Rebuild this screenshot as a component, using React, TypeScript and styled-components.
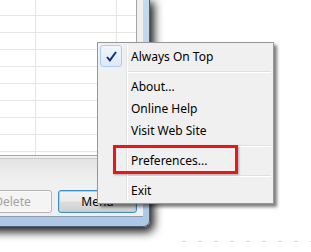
import React from "react";
import styled, {createGlobalStyle} from "styled-components";

const GlobalStyle = createGlobalStyle`
  html, body {
    margin: 0;
    padding: 0;
    background: #fff;
  }
  body {
    width: 311px;
    height: 252px;
    overflow: hidden;
    font-family: "Noto Sans", "Liberation Sans", sans-serif;
  }
`

const Stage = styled.div`
  position: relative;
  width: 311px;
  height: 252px;
  overflow: hidden;
  background: #fff;
`

const Window = styled.div`
  width: 190px;
  box-sizing: border-box;
  margin: -1px 0 0 -40px;
  padding: 0 6px 9px 6px;
  background: linear-gradient(#c4daf0, #adc8e6);
  border: 1px solid #4f6075;
  border-top: none;
  border-radius: 0 0 6px 6px;
  box-shadow: 3px 4px 10px 1px rgba(0, 0, 0, 0.9);
`

const Client = styled.div`
  background: #f0f0f0;
  padding-right: 6px;
  border-bottom: 1px solid #8e9cad;
`

const List = styled.div`
  height: 157px;
  box-sizing: border-box;
  background: #fff;
  border-right: 1px solid #a5a5a5;
  border-bottom: 1px solid #a5a5a5;
  overflow: hidden;
`

const Row = styled.div`
  display: grid;
  grid-template-columns: 69px 81px 1fr;
  height: 17px;
  box-sizing: border-box;
  border-bottom: 1px solid #e6e6e6;
`

const Cell = styled.div<{ $last?: boolean }>`
  border-right: ${p => p.$last ? "none" : "1px solid #e6e6e6"};
`

const Strip = styled.div`
  margin-top: 2px;
  height: 22px;
  border-top: 1px solid #c9c9c9;
  background: linear-gradient(#e4e4e4, #f0f0f0);
`

const ButtonRow = styled.div`
  display: flex;
  justify-content: flex-end;
  gap: 6px;
  padding: 9px 0 3px 0;
`

const Button = styled.div<{ $focused?: boolean; $disabled?: boolean }>`
  width: 79px;
  height: 23px;
  box-sizing: border-box;
  display: flex;
  align-items: center;
  justify-content: center;
  border-radius: 3px;
  font-size: 12px;
  color: ${p => p.$disabled ? "#a3a3a3" : "#000"};
  border: 1px solid ${p => p.$focused ? "#3c8fc9" : "#b4b4b4"};
  background: ${p => p.$disabled
    ? "#f4f4f4"
    : "linear-gradient(#f2f2f2 0%, #ebebeb 48%, #dddddd 52%, #cfcfcf 100%)"};
  box-shadow: ${p => p.$focused ? "inset 0 0 0 1px #8fdcf8" : "inset 0 0 0 1px #fbfbfb"};
`

const GreenRule = styled.div`
  margin: 14px 0 0 182px;
  height: 1px;
  background: repeating-linear-gradient(90deg, #c4f0bd 0 4px, transparent 4px 16px);
`

const Menu = styled.div`
  position: absolute;
  left: 97px;
  top: 42px;
  width: 177px;
  box-sizing: border-box;
  padding: 2px;
  background: #f0f0f0;
  border: 1px solid #979797;
  box-shadow: 3px 3px 3px rgba(0, 0, 0, 0.5);
  font-size: 12px;
  color: #000;

  &::before {
    content: "";
    position: absolute;
    left: 28px;
    top: 2px;
    bottom: 2px;
    width: 1px;
    background: #e2e3e3;
    border-right: 1px solid #fff;
  }
`

const Item = styled.div`
  display: flex;
  align-items: center;
  height: 22px;
`

const Gutter = styled.div<{ $checked?: boolean }>`
  width: 22px;
  height: 22px;
  box-sizing: border-box;
  display: flex;
  align-items: center;
  justify-content: center;
  border-radius: 3px;
  border: 1px solid ${p => p.$checked ? "#aaccf0" : "transparent"};
  background: ${p => p.$checked ? "linear-gradient(#f1f6fd, #dde9f8)" : "transparent"};
`

const Label = styled.span`
  margin-left: 9px;
  white-space: nowrap;
`

const Separator = styled.div`
  height: 8px;
  padding: 4px 0 0 27px;
  box-sizing: border-box;

  &::after {
    content: "";
    display: block;
    height: 1px;
    background: #e0e0e0;
    border-bottom: 1px solid #fff;
  }
`

const Highlight = styled.div`
  position: absolute;
  left: 113px;
  top: 145px;
  width: 125px;
  height: 29px;
  box-sizing: border-box;
  border: 3px solid #e81818;
  box-shadow: 1px 1px 2px rgba(0, 0, 0, 0.3);
`

const CheckMark = () => (
  <svg width="13" height="13" viewBox="0 0 13 13">
    <path d="M2 7 L4.9 10.4 L11 2" fill="none" stroke="#0d2a86" strokeWidth="1.9"/>
  </svg>
)

type Entry = { label?: string, checked?: boolean, separator?: boolean }

const entries: Entry[] = [
  {label: "Always On Top", checked: true},
  {separator: true},
  {label: "About..."},
  {label: "Online Help"},
  {label: "Visit Web Site"},
  {separator: true},
  {label: "Preferences..."},
  {separator: true},
  {label: "Exit"},
]

const App = () => {
  const rows = Array.from({length: 10});

  return (
    <Stage>
      <GlobalStyle/>
      <Window>
        <Client>
          <List>
            {rows.map((_, i) => (
              <Row key={i}>
                <Cell/>
                <Cell/>
                <Cell $last/>
              </Row>
            ))}
          </List>
          <Strip/>
          <ButtonRow>
            <Button $disabled>Delete</Button>
            <Button $focused>Menu</Button>
          </ButtonRow>
        </Client>
      </Window>
      <GreenRule/>
      <Menu>
        {entries.map((e, i) => e.separator ? (
          <Separator key={i}/>
        ) : (
          <Item key={i}>
            <Gutter $checked={e.checked}>{e.checked && <CheckMark/>}</Gutter>
            <Label>{e.label}</Label>
          </Item>
        ))}
      </Menu>
      <Highlight/>
    </Stage>
  );
};

export default App;
